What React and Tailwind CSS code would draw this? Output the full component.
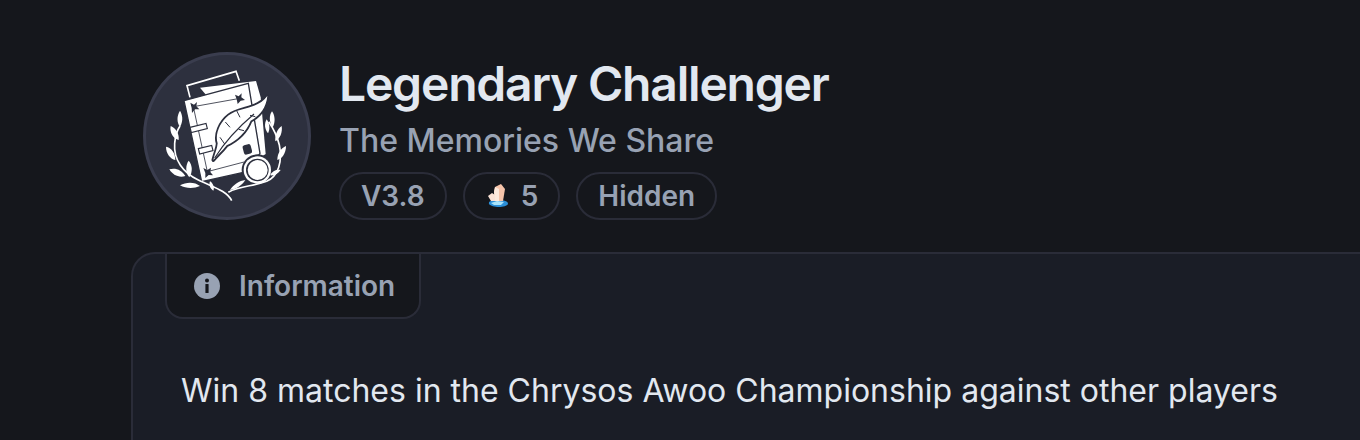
const INK = '#2d303e';

const Emblem = () => (
  <svg viewBox="48 45 486 486" className="w-full h-full">
    {/* back sheets */}
    <polyline points="180,172 171,137 318,94 328,122" fill="none" stroke="#fff" strokeWidth="5" />
    <polygon points="210,143 378,123 392,172 407,342 392,352 300,250" fill="#fff" />
    {/* book */}
    <polygon points="162,182 355,130 390,340 350,395 215,425" fill="#fff" stroke={INK} strokeWidth="4" />
    <path d="M190 200 L330 175 M190 200 L232 395 L342 366" fill="none" stroke={INK} strokeWidth="2.5" />
    <path d="M181 188 L192 194 L201 186 L199 199 L208 208 L195 208 L186 219 L185 204 Z" fill={INK} />
    <path d="M315 164 L326 169 L335 160 L334 172 L345 180 L332 182 L323 192 L320 178 Z" fill={INK} />
    <path d="M220 384 L232 390 L243 383 L241 396 L249 406 L236 405 L226 414 L226 399 Z" fill={INK} />
    <polygon points="180,262 228,250 232,266 184,278" fill="#fff" stroke={INK} strokeWidth="3.5" />
    <polygon points="205,326 245,316 249,332 209,342" fill="#fff" stroke={INK} strokeWidth="3.5" />
    {/* quill */}
    <path d="M412 168 C408 212 380 232 362 242 C348 278 320 302 290 316 C276 334 262 346 250 360 C254 342 262 326 263 310 C254 284 270 246 296 226 C330 200 385 208 412 168 Z" fill="#fff" stroke={INK} strokeWidth="11" strokeLinejoin="round" />
    <path d="M412 168 C408 212 380 232 362 242 C348 278 320 302 290 316 C276 334 262 346 250 360 C254 342 262 326 263 310 C254 284 270 246 296 226 C330 200 385 208 412 168 Z" fill="#fff" />
    <path d="M254 354 C280 312 320 266 372 222" fill="none" stroke={INK} strokeWidth="3.5" />
    <path d="M284 312 L270 292 M300 262 L286 246 M330 232 L320 212 M326 268 L342 272 M360 226 L376 230" stroke={INK} strokeWidth="3" />
    {/* stopwatch */}
    <path d="M365 352 L372 370" stroke="#fff" strokeWidth="8" />
    <rect x="336" y="310" width="32" height="36" rx="10" fill={INK} stroke="#fff" strokeWidth="7" transform="rotate(-15 352 328)" />
    <rect x="346" y="322" width="12" height="12" fill={INK} transform="rotate(-15 352 328)" />
    <circle cx="382" cy="390" r="47" fill={INK} />
    <circle cx="382" cy="390" r="41" fill="#fff" />
    <circle cx="382" cy="390" r="34" fill={INK} />
    <circle cx="383" cy="390" r="30" fill="#fff" />
    {/* left laurel */}
    <path d="M305 482 C290 452 250 442 205 420 C160 398 130 360 134 310 C136 285 142 270 150 258" fill="none" stroke="#fff" strokeWidth="5" />
    <path d="M150 212 C160 228 158 248 150 260 C140 248 140 228 150 212 Z" fill="#fff" />
    <path d="M122 258 C138 264 148 282 146 300 C130 296 118 278 122 258 Z" fill="#fff" />
    <path d="M108 320 C124 322 136 340 136 360 C120 356 108 340 108 320 Z" fill="#fff" />
    <path d="M118 388 C136 382 156 390 166 408 C148 414 128 406 118 388 Z" fill="#fff" />
    <path d="M150 436 C170 424 196 426 210 438 C192 446 168 446 150 436 Z" fill="#fff" />
    <path d="M176 362 C188 376 188 396 178 412 C166 398 166 376 176 362 Z" fill="#fff" />
    <path d="M240 424 C250 430 254 444 250 452 C240 446 236 434 240 424 Z" fill="#fff" />
    {/* right laurel */}
    <path d="M295 457 C330 436 370 440 410 424 C445 408 458 365 448 315 C442 290 430 265 416 245" fill="none" stroke="#fff" strokeWidth="5" />
    <path d="M426 214 C436 228 436 248 428 262 C418 248 416 228 426 214 Z" fill="#fff" />
    <path d="M455 258 C458 278 450 296 436 304 C434 284 442 268 455 258 Z" fill="#fff" />
    <path d="M468 318 C468 340 456 356 442 360 C442 340 452 326 468 318 Z" fill="#fff" />
    <path d="M452 390 C444 402 432 408 420 406 C426 394 438 388 452 390 Z" fill="#fff" />
    <path d="M346 420 C336 436 318 448 300 450 C310 434 328 422 346 420 Z" fill="#fff" />
    <path d="M410 238 C420 252 420 268 414 280 C404 268 402 252 410 238 Z" fill="#fff" />
  </svg>
);

const Crystal = () => (
  <svg viewBox="0 0 20 24" className="w-[20px] h-[24px] shrink-0 ml-[3px] mr-[2px]">
    <path d="M1 20 C0 17 4 16 10 16 C16 16 20 17 20 20 C18 24 4 24 1 20 Z" fill="#2b8fd8" />
    <path d="M3 19 L9 17 L16 18 L13 21 L6 21 Z" fill="#a9e4fb" />
    <path d="M7 3 L13 0 L17 5 L15 17 L7 17 L6 8 Z" fill="#f6c4aa" />
    <path d="M7 3 L11 5 L11 17 L7 17 L6 8 Z" fill="#fdeadd" />
    <path d="M0 12 L4 9 L7 11 L7 17 L3 17 Z" fill="#fbe3d6" />
  </svg>
);

const InfoIcon = () => (
  <svg viewBox="0 0 26 26" className="w-[26px] h-[26px] shrink-0">
    <circle cx="13" cy="13" r="13" fill="#98a2b3" />
    <rect x="11.4" y="11" width="3.2" height="9" rx="0.6" fill="#15171c" />
    <circle cx="13" cy="7.5" r="2" fill="#15171c" />
  </svg>
);

const Badge = ({ children }) => (
  <div className="h-[48px] px-[20px] flex items-center gap-[11px] rounded-full border-2 border-[#2a2c38] text-[28px] font-semibold text-[#98a2b3]">
    {children}
  </div>
);

export default function App() {
  return (
    <div className="w-[1360px] h-[440px] overflow-hidden bg-[#15171c] pt-[52px] pl-[131px] font-['Inter',sans-serif]">
      <div className="flex gap-[28px] pl-[12px]">
        <div className="w-[168px] h-[168px] shrink-0 rounded-full border-[3px] border-[#3a3d4e] bg-[#2d303e] overflow-hidden">
          <Emblem />
        </div>
        <div className="flex flex-col items-start min-w-0">
          <div className="text-5xl leading-[64px] font-semibold text-[#e2e8f0] tracking-tight whitespace-nowrap">
            Legendary Challenger
          </div>
          <div className="text-[32px] leading-[48px] font-medium text-[#98a2b3] mt-[1px] whitespace-nowrap">
            The Memories We Share
          </div>
          <div className="flex gap-[16px] mt-[7px]">
            <Badge>V3.8</Badge>
            <Badge><Crystal />5</Badge>
            <Badge>Hidden</Badge>
          </div>
        </div>
      </div>
      <div className="w-[1300px] h-[300px] mt-[32px] rounded-tl-[24px] border-t-2 border-l-2 border-[#2a2c38] bg-[#1a1d26] pl-[32px]">
        <div className="w-[256px] h-[65px] flex items-center gap-[19px] pl-[27px] rounded-b-[18px] border-2 border-t-0 border-[#2a2c38] bg-[#15171c] text-[28px] font-semibold text-[#98a2b3]">
          <InfoIcon />
          Information
        </div>
        <div className="mt-[48px] pl-[16px] text-[32px] leading-[48px] text-[#e2e8f0] whitespace-nowrap">
          Win 8 matches in the Chrysos Awoo Championship against other players
        </div>
      </div>
    </div>
  );
}
